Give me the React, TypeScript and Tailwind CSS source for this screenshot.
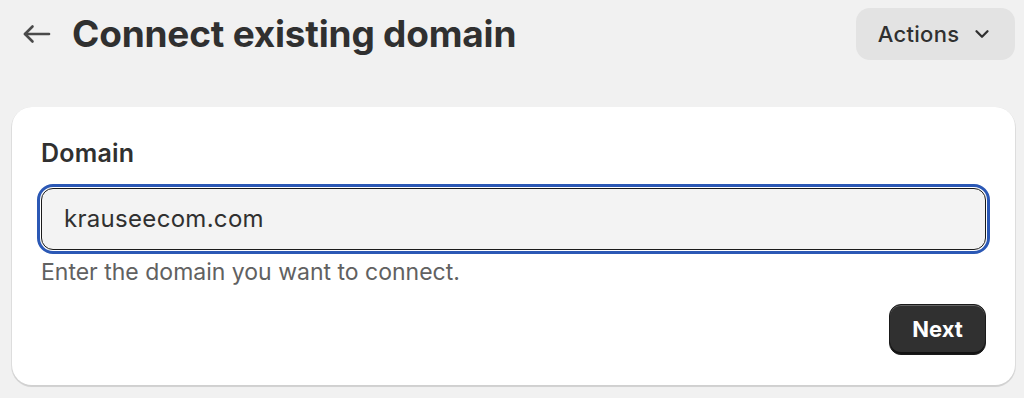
import React from "react";
import { ChevronDown } from "lucide-react";

const App: React.FC = () => {
  return (
    <div className="min-h-screen bg-[#f1f1f1] pl-3 pr-[9px] pt-2 font-['Inter',_'Liberation_Sans',_sans-serif] text-[#303030]">
      <div className="flex h-[52px] items-center justify-between">
        <div className="flex items-center">
          <button className="ml-[11px] flex h-[40px] w-[30px] items-center justify-start text-[#4a4a4a]">
            <svg width="28" height="20" viewBox="0 0 28 20" fill="none" stroke="currentColor" strokeWidth="2.6" strokeLinecap="round" strokeLinejoin="round">
              <path d="M26 10H2" />
              <path d="M9.5 2.5 2 10l7.5 7.5" />
            </svg>
          </button>
          <h1 className="ml-[19px] text-[37px] font-bold leading-[44px] tracking-[-0.2px]">
            Connect existing domain
          </h1>
        </div>
        <button className="flex h-[52px] w-[159px] items-center justify-center gap-3 rounded-[14px] bg-[#e3e3e3] text-[22px] font-medium">
          <span className="tracking-[0.3px]">Actions</span>
          <ChevronDown size={22} strokeWidth={2.5} />
        </button>
      </div>

      <div className="mt-[47px] rounded-[20px] bg-white pb-[30px] pl-[29px] pr-[29px] pt-[31px] shadow-[0_1px_0_1px_rgba(0,0,0,0.08),0_2px_1px_rgba(0,0,0,0.06)]">
        <label className="block text-[25px] font-semibold leading-[30px] tracking-[0.2px]">
          Domain
        </label>
        <div className="ml-[-4px] mr-[-4px] mt-[16px] rounded-[16px] border-[3px] border-[#2b58b5] bg-white p-[1px]">
          <div className="flex h-[62px] items-center rounded-[12px] border-[1.5px] border-[#1a1a1a] bg-[#f3f3f3] pl-[22px]">
            <span className="text-[24px] leading-[30px] tracking-[0.3px]">krauseecom.com</span>
          </div>
        </div>
        <p className="mt-[4px] text-[23px] leading-[28px] text-[#616161]">
          Enter the domain you want to connect.
        </p>
        <div className="mt-[18px] flex justify-end">
          <button className="flex h-[51px] w-[97px] items-center justify-center rounded-[12px] border border-[#1a1a1a] bg-[#303030] text-[22px] font-bold text-white shadow-[inset_0_1px_0_rgba(255,255,255,0.25),inset_0_-2px_0_rgba(0,0,0,0.6)]">
            Next
          </button>
        </div>
      </div>
    </div>
  );
};

export default App;
